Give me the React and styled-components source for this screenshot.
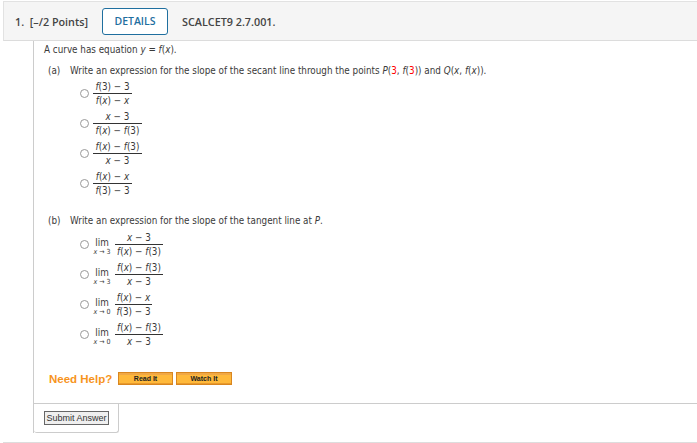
import React from "react";
import styled, { createGlobalStyle } from "styled-components";

const GlobalStyle = createGlobalStyle`
  body {
    margin: 0;
    background: #fff;
    color: #3a3a3a;
    font-family: "DejaVu Sans Condensed", "DejaVu Sans", Verdana, sans-serif;
    font-size: 9.8px;
  }
`;

const Page = styled.div`
  width: 697px;
  height: 443px;
  overflow: hidden;
  display: flex;
  flex-direction: column;
  padding-top: 1px;
  box-sizing: border-box;
`;

const Header = styled.div`
  margin-left: 3px;
  height: 40px;
  box-sizing: border-box;
  background: #f5f5f5;
  border-top: 1px solid #e2e2e2;
  border-left: 1px solid #e2e2e2;
  border-bottom: 1px solid #dcdcdc;
  display: flex;
  align-items: center;
  padding-left: 11px;
  font-family: "Open Sans", sans-serif;
  font-size: 10.8px;
  font-weight: 600;
  color: #444;
`;

const Points = styled.span`
  width: 87px;
  white-space: pre;
`;

const Details = styled.button`
  width: 66px;
  height: 27px;
  border: 1px solid #1f6f9f;
  border-radius: 3px;
  background: #fff;
  color: #1f6f9f;
  font: 600 10.5px "Open Sans", sans-serif;
  margin-right: 14px;
  padding: 0;
`;

const Body = styled.div`
  margin-left: 33px;
  border-left: 1px solid #ccc;
  height: 392px;
  display: flex;
  flex-direction: column;
`;

const Content = styled.div`
  height: 362px;
  padding: 3px 0 0 10px;
  box-sizing: border-box;
`;

const Line = styled.div`
  height: 12px;
  line-height: 12px;
  white-space: nowrap;
  margin-top: ${(p) => p.$top || 0}px;
  padding-left: ${(p) => p.$indent || 0}px;
`;

const Part = styled.span`
  display: inline-block;
  width: 22px;
`;

const Red = styled.span`
  color: #f00;
`;

const Options = styled.div`
  display: flex;
  flex-direction: column;
  gap: 3px;
  margin-top: ${(p) => p.$top}px;
  padding-left: 36px;
`;

const Option = styled.div`
  height: 27px;
  display: flex;
  align-items: center;
`;

const Radio = styled.span`
  width: 7px;
  height: 7px;
  border: 1px solid #999;
  border-radius: 50%;
  background: #fff;
  margin-right: 4px;
  flex: none;
`;

const Lim = styled.span`
  width: 22px;
  margin: 4px 2px 0 -2px;
  display: flex;
  flex-direction: column;
  align-items: center;
  line-height: 11px;
  small {
    font-size: 7px;
    line-height: 9px;
    white-space: nowrap;
  }
`;

const Fraction = styled.span`
  display: inline-flex;
  flex-direction: column;
  align-items: center;
  width: ${(p) => p.$width}px;
  line-height: 13px;
  span + span {
    border-top: 1px solid #333;
    width: 100%;
    text-align: center;
  }
`;

const Footer = styled.div`
  border-top: 1px solid #ccc;
  height: 30px;
  box-sizing: border-box;
`;

const Help = styled.div`
  display: flex;
  align-items: center;
  margin-top: 24px;
  padding-left: 5px;
`;

const HelpLabel = styled.span`
  font: 700 11.5px "Liberation Sans", sans-serif;
  color: #f7941d;
  width: 69px;
`;

const HelpButton = styled.button`
  width: ${(p) => p.$width}px;
  height: 13px;
  margin-right: 3px;
  padding: 0;
  border: 1px solid #d9861f;
  background: linear-gradient(#f0a845 0 2px, #ffb93b 2px 10px, #e89a2c 10px);
  color: #222;
  font: 700 7px "Liberation Sans", sans-serif;
`;

const SubmitBox = styled.div`
  width: 85px;
  height: 29px;
  box-sizing: border-box;
  border-right: 1px solid #ccc;
  border-bottom: 1px solid #ccc;
  border-radius: 0 0 3px 3px;
  padding: 7px 0 0 10px;
`;

const Submit = styled.button`
  display: block;
  width: 65px;
  height: 14px;
  padding: 0;
  border: 1px solid #666;
  background: #efefef;
  color: #333;
  font: 9px "Liberation Sans", sans-serif;
`;

const BottomRule = styled.div`
  margin: 9px 0 0 3px;
  border-top: 1px solid #ddd;
`;

const Choice = ({ top, bottom, width, sub }) => (
  <Option>
    <Radio />
    {sub && (
      <Lim>
        lim
        <small>
          <i>x</i> → {sub}
        </small>
      </Lim>
    )}
    <Fraction $width={width}>
      <span>{top}</span>
      <span>{bottom}</span>
    </Fraction>
  </Option>
);

const fx = (
  <>
    <i>f</i>(<i>x</i>)
  </>
);
const f3 = (
  <>
    <i>f</i>(3)
  </>
);
const x = <i>x</i>;

export default function App() {
  return (
    <Page>
      <GlobalStyle />
      <Header>
        <Points>1.  [–/2 Points]</Points>
        <Details>DETAILS</Details>
        SCALCET9 2.7.001.
      </Header>
      <Body>
        <Content>
          <Line>
            A curve has equation <i>y</i> = {fx}.
          </Line>
          <Line $top={9} $indent={4}>
            <Part>(a)</Part>
            Write an expression for the slope of the secant line through the points <i>P</i>(
            <Red>3</Red>, <i>f</i>(<Red>3</Red>)) and <i>Q</i>({x}, {fx}).
          </Line>
          <Options $top={3}>
            <Choice width={39} top={<>{f3} − 3</>} bottom={<>{fx} − {x}</>} />
            <Choice width={49} top={<>{x} − 3</>} bottom={<>{fx} − {f3}</>} />
            <Choice width={49} top={<>{fx} − {f3}</>} bottom={<>{x} − 3</>} />
            <Choice width={39} top={<>{fx} − {x}</>} bottom={<>{f3} − 3</>} />
          </Options>
          <Line $top={18} $indent={4}>
            <Part>(b)</Part>
            Write an expression for the slope of the tangent line at <i>P</i>.
          </Line>
          <Options $top={4}>
            <Choice sub="3" width={48} top={<>{x} − 3</>} bottom={<>{fx} − {f3}</>} />
            <Choice sub="3" width={48} top={<>{fx} − {f3}</>} bottom={<>{x} − 3</>} />
            <Choice sub="0" width={37} top={<>{fx} − {x}</>} bottom={<>{f3} − 3</>} />
            <Choice sub="0" width={48} top={<>{fx} − {f3}</>} bottom={<>{x} − 3</>} />
          </Options>
          <Help>
            <HelpLabel>Need Help?</HelpLabel>
            <HelpButton $width={55}>Read It</HelpButton>
            <HelpButton $width={56}>Watch It</HelpButton>
          </Help>
        </Content>
        <Footer>
          <SubmitBox>
            <Submit>Submit Answer</Submit>
          </SubmitBox>
        </Footer>
      </Body>
      <BottomRule />
    </Page>
  );
}
